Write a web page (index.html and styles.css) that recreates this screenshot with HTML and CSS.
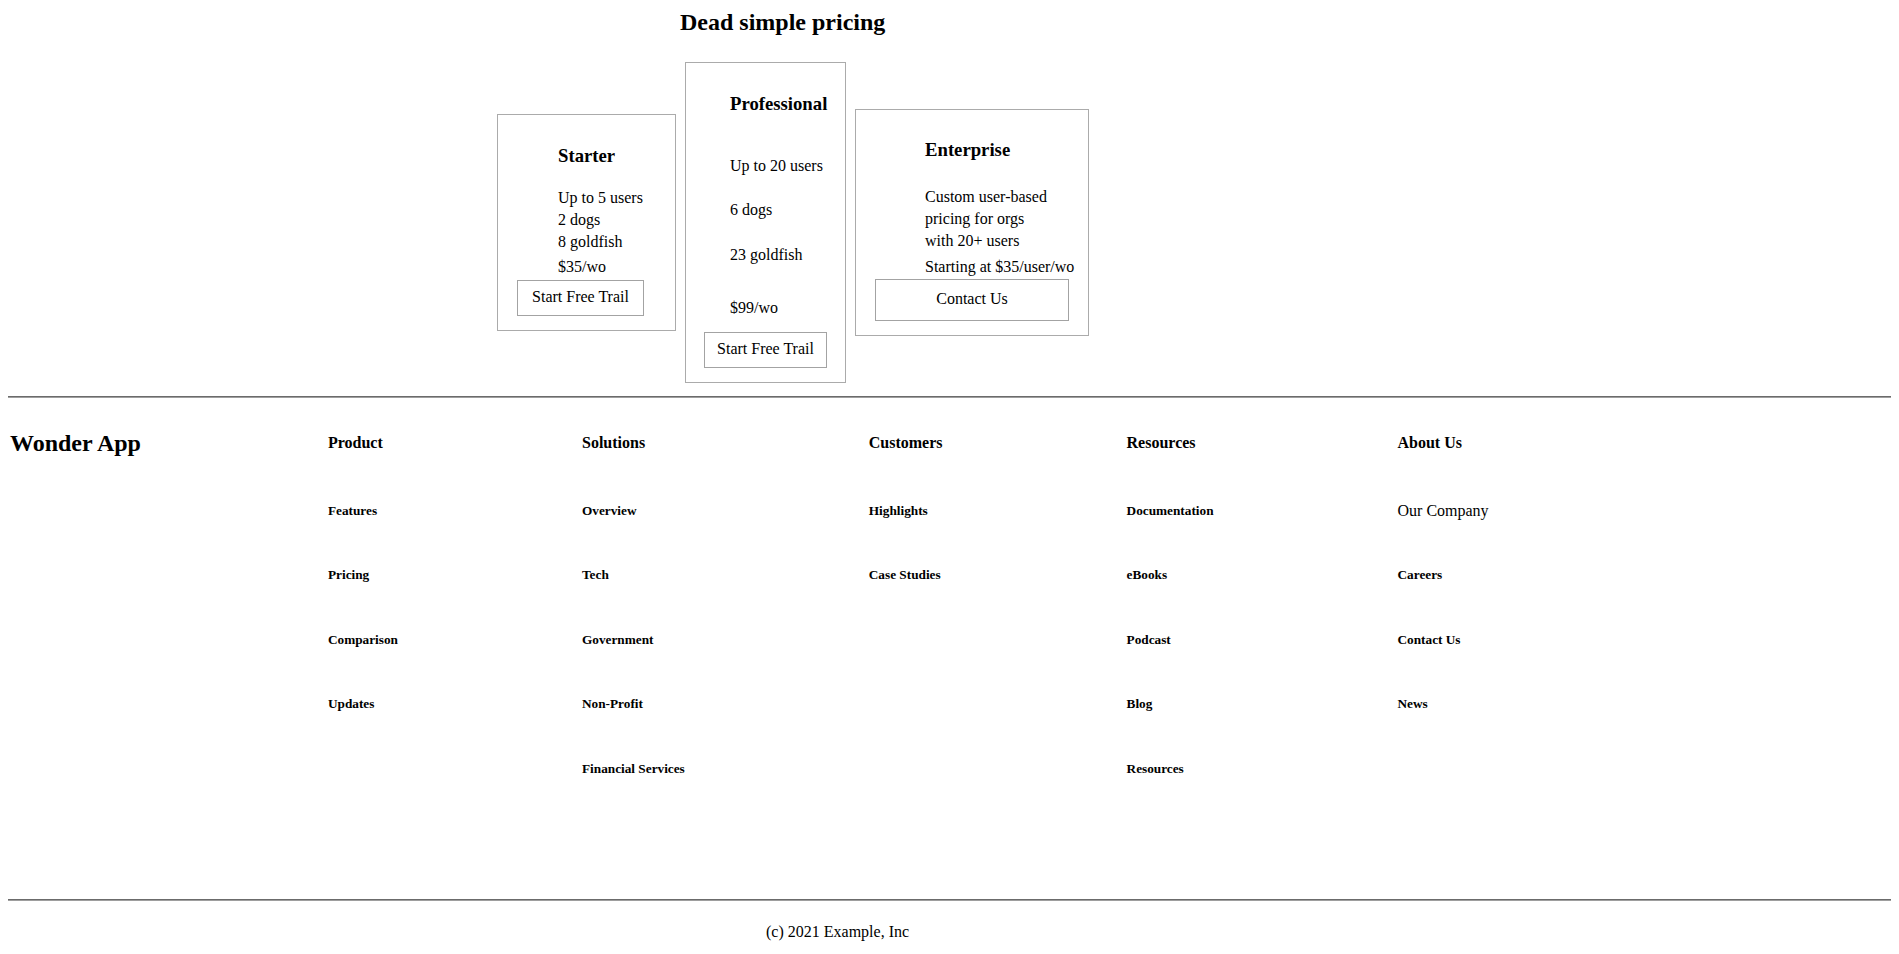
FILE: index.html
```html
<!DOCTYPE html>
<html lang="en">
<head>
  <meta charset="UTF-8" />
  <meta name="viewport" content="width=device-width, initial-scale=1.0"/>
  <title>Wonder App - Pricing</title>
  <link rel="stylesheet" href="styles.css">
</head>
<body>

  <main class="page">
    <section class="pricing">
      <h2 class="pricing-title">Dead simple pricing</h2>

      <div class="plans">
        <div class="plan plan-starter">
          <div class="plan-body">
            <h3 class="plan-name">Starter</h3>
            <ul class="plan-features">
              <li>Up to 5 users</li>
              <li>2 dogs</li>
              <li>8 goldfish</li>
            </ul>
            <p class="plan-price">$35/wo</p>
          </div>
          <button class="plan-btn">Start Free Trail</button>
        </div>

        <div class="plan plan-pro">
          <div class="plan-body">
            <h3 class="plan-name">Professional</h3>
            <ul class="plan-features">
              <li>Up to 20 users</li>
              <li>6 dogs</li>
              <li>23 goldfish</li>
            </ul>
            <p class="plan-price">$99/wo</p>
          </div>
          <button class="plan-btn">Start Free Trail</button>
        </div>

        <div class="plan plan-enterprise">
          <div class="plan-body">
            <h3 class="plan-name">Enterprise</h3>
            <p class="plan-desc">Custom user-based<br>pricing for orgs<br>with 20+ users</p>
            <p class="plan-price">Starting at $35/user/wo</p>
          </div>
          <button class="plan-btn">Contact Us</button>
        </div>
      </div>
    </section>

    <hr class="rule rule-top">

    <footer class="site-footer">
      <div class="footer-cols">
        <h2 class="brand">Wonder App</h2>

        <div class="footer-col">
          <h4>Product</h4>
          <ul>
            <li>Features</li>
            <li>Pricing</li>
            <li>Comparison</li>
            <li>Updates</li>
          </ul>
        </div>

        <div class="footer-col">
          <h4>Solutions</h4>
          <ul>
            <li>Overview</li>
            <li>Tech</li>
            <li>Government</li>
            <li>Non-Profit</li>
            <li>Financial Services</li>
          </ul>
        </div>

        <div class="footer-col">
          <h4>Customers</h4>
          <ul>
            <li>Highlights</li>
            <li>Case Studies</li>
          </ul>
        </div>

        <div class="footer-col">
          <h4>Resources</h4>
          <ul>
            <li>Documentation</li>
            <li>eBooks</li>
            <li>Podcast</li>
            <li>Blog</li>
            <li>Resources</li>
          </ul>
        </div>

        <div class="footer-col">
          <h4>About Us</h4>
          <ul>
            <li class="plain">Our Company</li>
            <li>Careers</li>
            <li>Contact Us</li>
            <li>News</li>
          </ul>
        </div>
      </div>

      <hr class="rule">

      <p class="copyright">(c) 2021 Example, Inc</p>
    </footer>
  </main>

</body>
</html>
```

FILE: styles.css
```css
body {
  margin: 0;
  font-family: 'Liberation Serif', 'Times New Roman', serif;
  font-size: 16px;
  color: #000;
  background: #fff;
}
.page {
  padding: 0 8px;
}

/* pricing */
.pricing-title {
  margin: 0;
  padding: 8px 0 0 672px;
  font-size: 24px;
  line-height: 28px;
}
.plans {
  display: flex;
  align-items: center;
  gap: 9px;
  margin: 26px 0 0 489px;
}
.plan {
  box-sizing: border-box;
  display: flex;
  flex-direction: column;
  align-items: flex-start;
  border: 1px solid #ababab;
  padding: 0 19px 14px;
}
.plan-body {
  white-space: nowrap;
}
.plan-name {
  margin: 30px 0 0;
  font-size: 18.72px;
  line-height: 22px;
}
.plan-features {
  list-style: none;
  margin: 0;
  padding: 0;
}
.plan-features li,
.plan-price,
.plan-desc {
  line-height: 22px;
}
.plan-price,
.plan-desc {
  margin: 0;
}
.plan-btn {
  font-family: inherit;
  font-size: 16px;
  line-height: 18px;
  color: #000;
  background: #fff;
  border: 1px solid #a3a3a3;
  padding: 7px 0 9px;
  text-align: center;
}

.plan-starter {
  width: 179px;
}
.plan-starter .plan-body {
  padding-left: 41px;
}
.plan-starter .plan-features {
  margin-top: 20px;
}
.plan-starter .plan-price {
  margin-top: 3px;
}
.plan-starter .plan-btn {
  width: 127px;
  margin-top: 2px;
}

.plan-pro {
  width: 161px;
  padding-left: 18px;
}
.plan-pro .plan-body {
  padding-left: 26px;
}
.plan-pro .plan-features {
  margin-top: 39.5px;
}
.plan-pro .plan-features li + li {
  margin-top: 22.5px;
}
.plan-pro .plan-price {
  margin-top: 31.5px;
}
.plan-pro .plan-btn {
  width: 123px;
  margin-top: 13px;
}

.plan-enterprise {
  width: 234px;
}
.plan-enterprise .plan-body {
  padding-left: 50px;
}
.plan-enterprise .plan-name {
  margin-top: 29px;
}
.plan-enterprise .plan-desc {
  margin-top: 24.5px;
}
.plan-enterprise .plan-price {
  margin-top: 4px;
}
.plan-enterprise .plan-btn {
  align-self: stretch;
  margin-top: 1.5px;
  padding: 10px 0 12px;
}

/* rules */
.rule {
  margin: 0;
  height: 0;
  border: 0;
  border-top: 1px solid #6b6b6b;
  border-bottom: 1px solid #9e9e9e;
}
.rule-top {
  margin-top: 13px;
}

/* footer */
.footer-cols {
  display: flex;
  align-items: flex-start;
  gap: 184px;
  padding-left: 2px;
  margin: 31px 0 122.5px;
}
.brand {
  margin: 0 3px 0 0;
  font-size: 24px;
  line-height: 28px;
}
.footer-col h4 {
  margin: 4px 0 0;
  font-size: 16px;
  line-height: 20px;
}
.footer-col ul {
  list-style: none;
  margin: 49.5px 0 0;
  padding: 0;
  display: flex;
  flex-direction: column;
  gap: 48.5px;
}
.footer-col li {
  font-size: 13.28px;
  font-weight: bold;
  line-height: 16px;
  white-space: nowrap;
}
.footer-col li.plain {
  font-size: 16px;
  font-weight: normal;
}
.copyright {
  margin: 21px 0 0;
  padding-left: 758px;
  line-height: 20px;
}
```
